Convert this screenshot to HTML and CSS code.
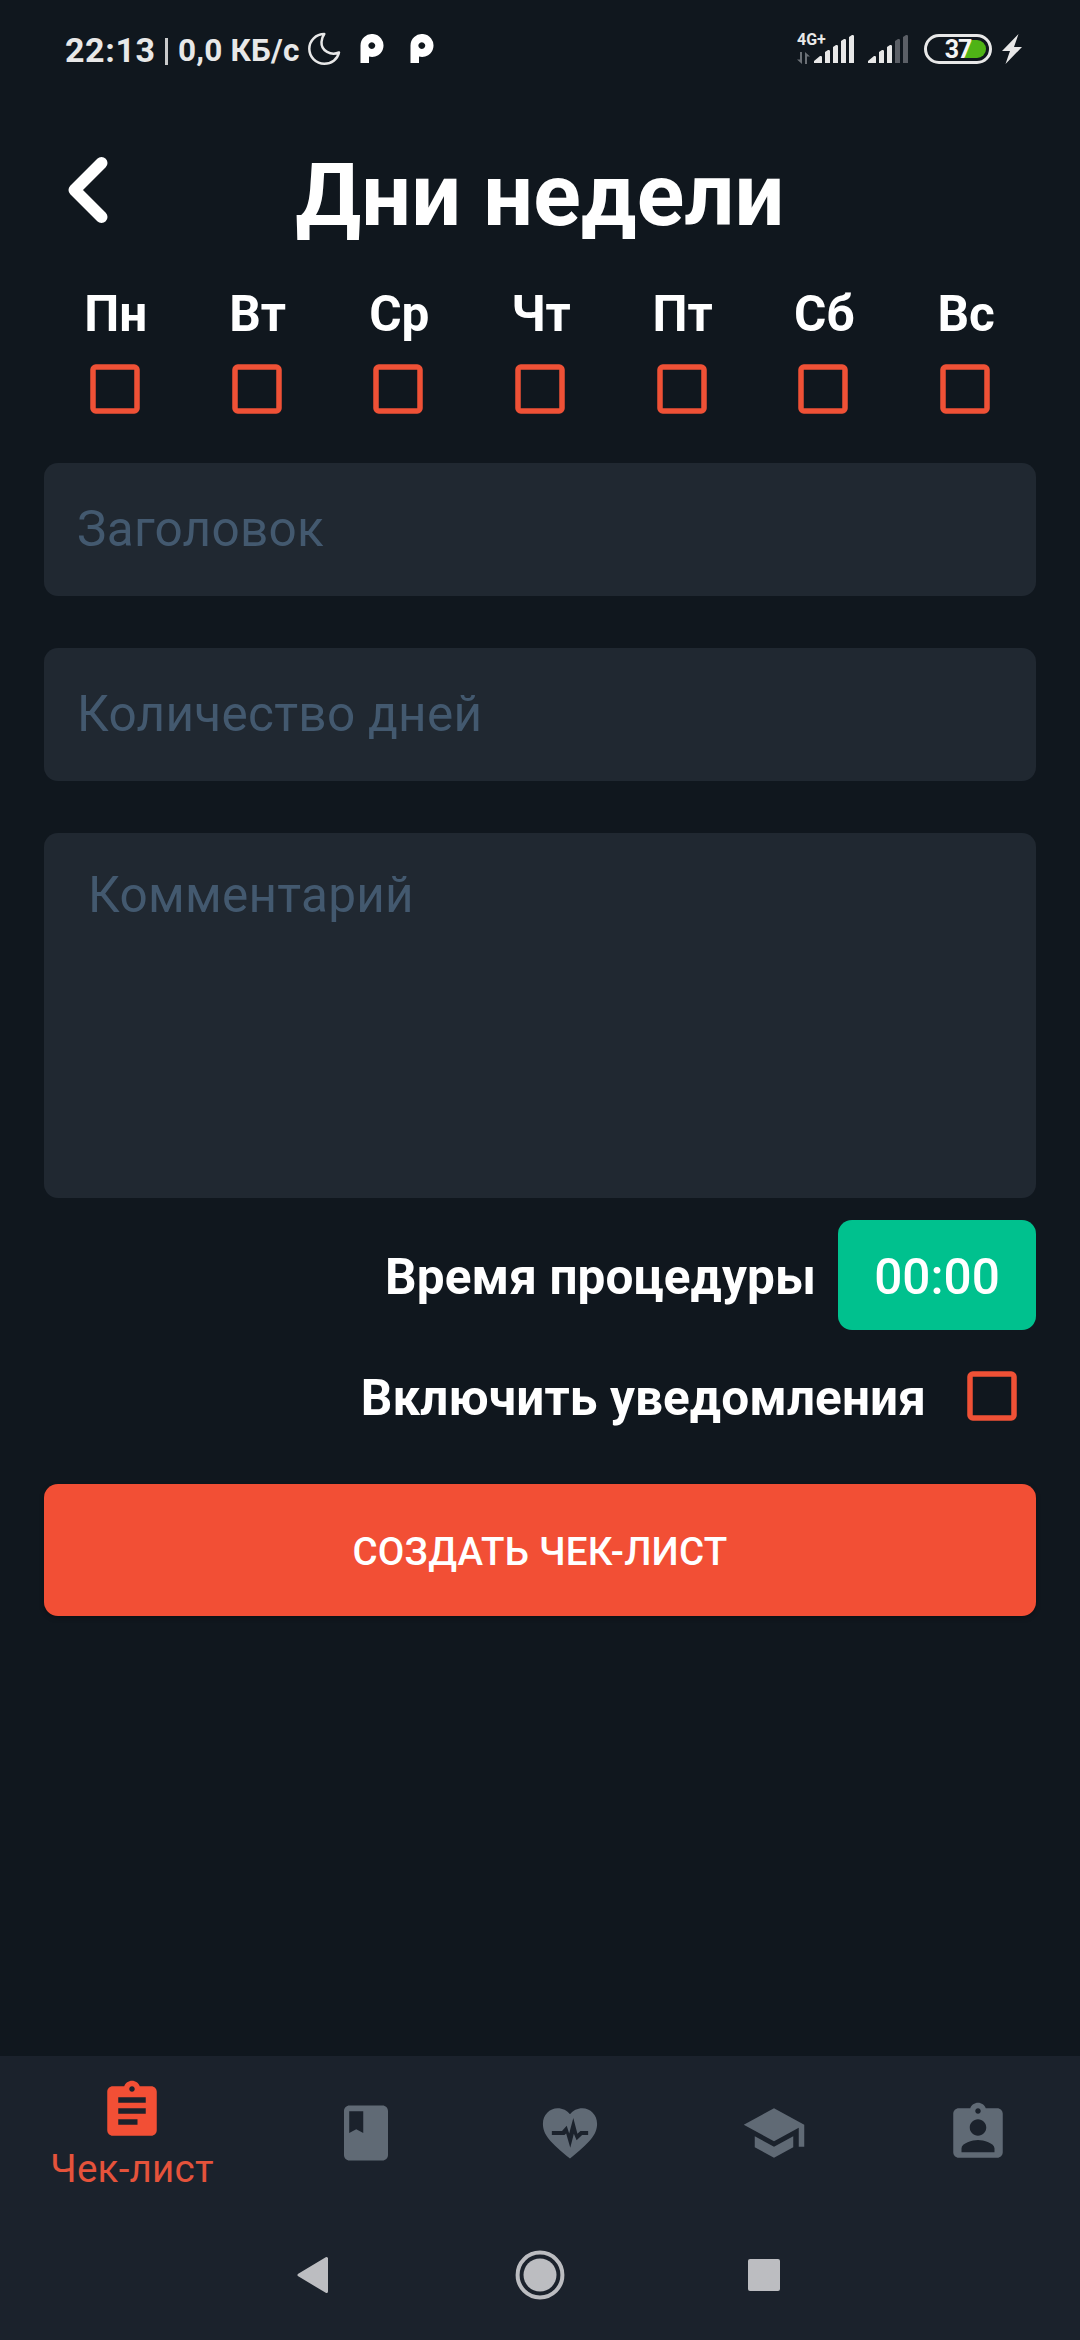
FILE: index.html
```html
<!DOCTYPE html>
<html lang="ru">
<head>
<meta charset="utf-8">
<title>Дни недели</title>
<link rel="stylesheet" href="styles.css">
</head>
<body>
<div class="screen">
  <div class="status">
    <span class="clock">22:13</span>
    <span class="divider"></span>
    <span class="speed">0,0 КБ/с</span>
    <svg class="moon" width="34" height="34" viewBox="0 0 34 34"><path d="M17.3 2C9 2 2.300 8.500 2.300 16.700S9 31.700 17.300 31.700C24.500 31.700 30.500 27.300 32 20.500C24 24 14 19 14.500 10C14.600 7 15.500 4.500 17.300 2Z" fill="none" stroke="#e8e8e8" stroke-width="2.500" stroke-linejoin="round"/></svg>
    <svg class="badge-p" width="24" height="30" viewBox="0 0 24 30"><path fill-rule="evenodd" fill="#fff" d="M0.500 29V11.500A11.500 11.500 0 1 1 9 22.600V29ZM11.800 8.200A3.400 3.400 0 1 0 11.810 8.200Z"/></svg>
    <svg class="badge-p second" width="24" height="30" viewBox="0 0 24 30"><path fill-rule="evenodd" fill="#fff" d="M0.500 29V11.500A11.500 11.500 0 1 1 9 22.600V29ZM11.800 8.200A3.400 3.400 0 1 0 11.810 8.200Z"/></svg>
    <div class="network">
      <span class="net-type">4G+</span>
      <svg class="arrows" width="13" height="12" viewBox="0 0 13 12"><path fill="#6b7076" d="M3 0h2v12L0 7.500h3ZM8 12h2V4.500h3L8 0Z"/></svg>
    </div>
    <svg class="signal" width="40" height="30" viewBox="0 0 40 30"><path fill="#e8e8e8" d="M0 29v-2l6-5q2-.5 2 1v6ZM11 29V18l3-2q2-.3 2 1v12ZM19 29V13l3-2q2-.3 2 1v17ZM27 29V7l3-2q2-.3 2 1v23ZM35 29V3l3-2q2-.3 2 1v27Z"/></svg>
    <svg class="signal signal-two" width="40" height="30" viewBox="0 0 40 30"><path fill="#e8e8e8" d="M0 29v-2l6-5q2-.5 2 1v6ZM11 29V18l3-2q2-.3 2 1v12ZM19 29V13l3-2q2-.3 2 1v17Z"/><path fill="#5b5f66" d="M27 29V7l3-2q2-.3 2 1v23ZM35 29V3l3-2q2-.3 2 1v27Z"/></svg>
    <div class="battery"><span class="battery-level">37</span></div>
    <svg class="bolt" width="20" height="30" viewBox="0 0 20 30"><path fill="#e8e8e8" d="M16.500 0L0 17h8L3.500 30L20 13h-8Z"/></svg>
  </div>

  <header class="header">
    <svg class="back" width="44" height="70" viewBox="0 0 44 70"><path d="M35.500 8L8.500 35L35.500 62" fill="none" stroke="#fff" stroke-width="12" stroke-linecap="round" stroke-linejoin="round"/></svg>
    <h1 class="title">Дни недели</h1>
  </header>

  <div class="days">
    <div class="day"><span>Пн</span><svg class="check" viewBox="0 0 50 50"><rect x="3" y="3" width="44" height="44" rx="2.800"/></svg></div>
    <div class="day"><span>Вт</span><svg class="check" viewBox="0 0 50 50"><rect x="3" y="3" width="44" height="44" rx="2.800"/></svg></div>
    <div class="day"><span>Ср</span><svg class="check" viewBox="0 0 50 50"><rect x="3" y="3" width="44" height="44" rx="2.800"/></svg></div>
    <div class="day"><span>Чт</span><svg class="check" viewBox="0 0 50 50"><rect x="3" y="3" width="44" height="44" rx="2.800"/></svg></div>
    <div class="day"><span>Пт</span><svg class="check" viewBox="0 0 50 50"><rect x="3" y="3" width="44" height="44" rx="2.800"/></svg></div>
    <div class="day"><span>Сб</span><svg class="check" viewBox="0 0 50 50"><rect x="3" y="3" width="44" height="44" rx="2.800"/></svg></div>
    <div class="day"><span>Вс</span><svg class="check" viewBox="0 0 50 50"><rect x="3" y="3" width="44" height="44" rx="2.800"/></svg></div>
  </div>

  <div class="form">
    <div class="field">Заголовок</div>
    <div class="field">Количество дней</div>
    <div class="field comment">Комментарий</div>
  </div>

  <div class="row time-row">
    <span class="label">Время процедуры</span>
    <div class="time">00:00</div>
  </div>
  <div class="row notify-row">
    <span class="label">Включить уведомления</span>
    <svg class="check" viewBox="0 0 50 50"><rect x="3" y="3" width="44" height="44" rx="2.800"/></svg>
  </div>
  <div class="create">СОЗДАТЬ ЧЕК-ЛИСТ</div>

  <nav class="tabs">
    <div class="tab active">
      <svg width="66" height="66" viewBox="0 0 24 24"><path d="M19 3h-4.180C14.400 1.840 13.300 1 12 1c-1.300 0-2.400.84-2.820 2H5c-1.100 0-2 .9-2 2v14c0 1.100.9 2 2 2h14c1.100 0 2-.9 2-2V5c0-1.100-.9-2-2-2zm-7 0c.55 0 1 .45 1 1s-.45 1-1 1-1-.45-1-1 .45-1 1-1zm2 14H7v-2h7v2zm3-4H7v-2h10v2zm0-4H7V7h10v2z"/></svg>
      <span class="tab-label">Чек-лист</span>
    </div>
    <div class="tab"><svg width="66" height="66" viewBox="0 0 24 24"><path fill-rule="evenodd" d="M18 2H6c-1.100 0-2 .9-2 2v16c0 1.100.9 2 2 2h12c1.100 0 2-.9 2-2V4c0-1.100-.9-2-2-2zM5.900 4.100h5.100v7.900l-2.550-1.400-2.550 1.400z"/></svg></div>
    <div class="tab"><svg width="66" height="66" viewBox="0 0 24 24"><path d="M12 21.300C5 15.500 2.150 12.700 2.150 8.600C2.150 5.400 4.600 3 7.500 3C9.300 3 11 3.800 12 5.200C13 3.800 14.700 3 16.500 3C19.400 3 21.850 5.400 21.850 8.600C21.850 12.700 19 15.500 12 21.300Z"/><path class="pulse" d="M5.400 11.300h3.700l1.700-1.900.9 2.800 1.500-5.700 1.500 5.800 1.100-1h2.800v1.400h-2.200l-2 1.900-1-2.300-1.300 5.100-1.500-5.200-.6.500H5.400z"/></svg></div>
    <div class="tab"><svg width="66" height="66" viewBox="0 0 24 24"><path d="M5 13.180v4L12 21l7-3.820v-4L12 17l-7-3.820zM12 3L1 9l11 6 9-4.910V17h2V9L12 3z"/></svg></div>
    <div class="tab"><svg width="66" height="66" viewBox="0 0 24 24"><path d="M19 3h-4.180C14.400 1.840 13.300 1 12 1c-1.300 0-2.400.84-2.820 2H5c-1.100 0-2 .9-2 2v14c0 1.100.9 2 2 2h14c1.100 0 2-.9 2-2V5c0-1.100-.9-2-2-2zm-7 0c.55 0 1 .45 1 1s-.45 1-1 1-1-.45-1-1 .45-1 1-1zm0 4c1.660 0 3 1.340 3 3s-1.340 3-3 3-3-1.340-3-3 1.340-3 3-3zm6 12H6v-1.400c0-2 4-3.100 6-3.100s6 1.100 6 3.100V19z"/></svg></div>
  </nav>
  <div class="system">
    <svg class="sys-back" width="32" height="38" viewBox="0 0 32 38"><path d="M2 19L29.500 2.500V35.500Z" stroke-width="3" stroke-linejoin="round"/></svg>
    <svg class="sys-home" width="50" height="50" viewBox="0 0 50 50"><circle cx="25" cy="25" r="16.500"/><circle class="ring" cx="25" cy="25" r="22.400"/></svg>
    <div class="sys-recent"></div>
  </div>
</div>
</body>
</html>
```
FILE: styles.css
```css
* { box-sizing: border-box; }

body {
  margin: 0;
  background: #10171e;
  font-family: Roboto, "Noto Sans", sans-serif;
}

.screen {
  width: 1080px;
  height: 2340px;
  display: flex;
  flex-direction: column;
  background: #10171e;
  color: #fff;
  overflow: hidden;
}

svg { display: block; flex: none; }

/* Status bar */
.status {
  height: 100px;
  padding: 0 58px 2px 65px;
  display: flex;
  align-items: center;
  color: #e8e8e8;
  flex: none;
}
.clock { font-size: 34px; font-weight: 700; letter-spacing: 0.6px; width: 100px; line-height: 40px; margin-top: 2px; }
.divider { width: 3px; height: 27px; background: #c9cacb; margin-top: 4px; }
.speed { font-size: 31.500px; font-weight: 700; letter-spacing: 0.2px; width: 127px; margin-left: 10px; line-height: 40px; margin-top: 4px; white-space: nowrap; }
.moon { margin-left: 2px; }
.badge-p { margin-left: 19px; }
.badge-p.second { margin-left: 26px; }
.network {
  margin-left: auto;
  width: 30px;
  height: 31px;
  display: flex;
  flex-direction: column;
  justify-content: space-between;
}
.net-type { font-size: 16px; font-weight: 700; line-height: 12px; white-space: nowrap; }
.arrows { margin-bottom: 1px; }
.signal { margin-left: -13px; }
.signal-two { margin-left: 14px; }
.battery {
  width: 68px;
  height: 30px;
  margin-left: 16px;
  border: 3px solid #e8e8e8;
  border-radius: 15px;
  padding: 3px;
  display: flex;
}
.battery-level {
  flex: 1;
  border-radius: 9px;
  background: linear-gradient(100deg, transparent 64%, #4fb316 64%);
  font-size: 25px;
  letter-spacing: -1px;
  font-weight: 700;
  line-height: 19px;
  text-align: center;
  color: #f4f4f4;
}
.bolt { margin-left: 10px; }

/* Header */
.header {
  height: 176px;
  display: grid;
  grid-template-columns: 108px 1fr 108px;
  align-items: center;
  flex: none;
}
.back { margin-left: 66px; margin-top: 4px; }
.title {
  margin: 14px 0 0;
  font-size: 88px;
  line-height: 104px;
  font-weight: 700;
  letter-spacing: 0.2px;
  text-align: center;
}

/* Weekday picker */
.days {
  display: grid;
  grid-template-columns: repeat(7, 1fr);
  padding: 8px 44px 0;
  height: 187px;
  flex: none;
}
.day {
  display: flex;
  flex-direction: column;
  align-items: center;
  gap: 20px;
  font-size: 49.500px;
  line-height: 60px;
  font-weight: 700;
}
.day span { padding-left: 2px; }
.check {
  width: 50px;
  height: 50px;
  fill: none;
  stroke: #ef5136;
  stroke-width: 5.500px;
}

/* Inputs */
.form {
  display: flex;
  flex-direction: column;
  gap: 52px;
  padding: 0 44px;
  flex: none;
}
.field {
  height: 133px;
  border-radius: 14px;
  background: #202831;
  color: #43596f;
  font-size: 49.500px;
  letter-spacing: 0.28px;
  line-height: 133px;
  padding-left: 33px;
}
.comment {
  height: 365px;
  padding-left: 44px;
  line-height: 60px;
  padding-top: 32px;
}

/* Option rows */
.row {
  display: flex;
  justify-content: flex-end;
  align-items: center;
  padding-right: 44px;
  flex: none;
}
.label {
  font-size: 49.500px;
  font-weight: 700;
  letter-spacing: 0.1px;
  line-height: 60px;
  padding-top: 4px;
}
.time-row { height: 110px; margin-top: 22px; gap: 22px; }
.time {
  width: 198px;
  height: 110px;
  border-radius: 14px;
  background: #00c18e;
  font-size: 49.500px;
  font-weight: 500;
  line-height: 114px;
  text-align: center;
}
.notify-row { height: 66px; margin-top: 33px; padding-right: 63px; gap: 41px; }
.create {
  margin: 55px 44px 0;
  height: 132px;
  border-radius: 14px;
  background: #f24f35;
  box-shadow: 0 2px 5px rgba(0, 0, 0, 0.3);
  font-size: 38.500px;
  font-weight: 500;
  letter-spacing: 0.22px;
  line-height: 136px;
  text-align: center;
  flex: none;
}

/* Tab bar */
.tabs {
  margin-top: auto;
  height: 154px;
  display: grid;
  grid-template-columns: 264px repeat(4, 204px);
  background: #1b222c;
  fill: #606a75;
  flex: none;
}
.tab {
  display: flex;
  flex-direction: column;
  align-items: center;
  justify-content: center;
}
.active {
  justify-content: flex-start;
  padding-top: 22px;
  fill: #f24f35;
  color: #e5533b;
}
.tab-label { font-size: 38.500px; letter-spacing: 0.25px; line-height: 46px; margin-top: 2px; }
.pulse { fill: #1b222c; }

/* System navigation */
.system {
  height: 130px;
  display: flex;
  align-items: center;
  background: #1b222c;
  fill: #bcbdc1;
  stroke: #bcbdc1;
  stroke-width: 0;
  flex: none;
}
.sys-back { margin-left: 297px; }
.sys-home { margin-left: 186px; }
.ring { fill: none; stroke-width: 4; }
.sys-recent { margin-left: 183px; width: 32px; height: 32px; border-radius: 2px; background: #bcbdc1; }
```
